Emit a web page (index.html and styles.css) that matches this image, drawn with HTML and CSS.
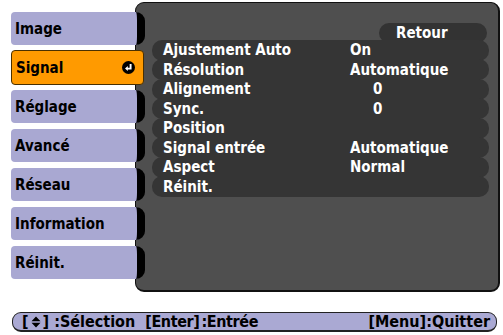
FILE: index.html
```html
<!DOCTYPE html>
<html>
<head>
<meta charset="utf-8">
<link rel="stylesheet" href="styles.css">
</head>
<body>
<div class="screen">
  <div class="main">
    <div class="tabs">
      <div class="tab"><span>Image</span></div>
      <div class="tab active"><span>Signal</span>
        <svg class="enter" width="13" height="13" viewBox="0 0 13 13"><circle cx="6.5" cy="6.5" r="6.5" fill="#000"/><path d="M8.6 3v4.6H5" fill="none" stroke="#fff" stroke-width="1.9"/><path d="M3 7.6l2.8-2.5v5z" fill="#fff"/></svg>
      </div>
      <div class="tab"><span>Réglage</span></div>
      <div class="tab"><span>Avancé</span></div>
      <div class="tab"><span>Réseau</span></div>
      <div class="tab"><span>Information</span></div>
      <div class="tab"><span>Réinit.</span></div>
    </div>
    <div class="panel">
      <div class="top"><div class="retour">Retour</div></div>
      <div class="rows">
        <div class="row"><span class="lbl">Ajustement Auto</span><span class="val">On</span></div>
        <div class="row"><span class="lbl">Résolution</span><span class="val">Automatique</span></div>
        <div class="row"><span class="lbl">Alignement</span><span class="val num">0</span></div>
        <div class="row"><span class="lbl">Sync.</span><span class="val num">0</span></div>
        <div class="row"><span class="lbl">Position</span><span class="val"></span></div>
        <div class="row"><span class="lbl">Signal entrée</span><span class="val">Automatique</span></div>
        <div class="row"><span class="lbl">Aspect</span><span class="val">Normal</span></div>
        <div class="row"><span class="lbl">Réinit.</span><span class="val"></span></div>
      </div>
    </div>
  </div>
  <div class="help">
    <span class="h1">[<svg class="ud" width="10" height="12" viewBox="0 0 10 12"><path d="M5 0.5L9.5 5.3H0.5z M5 11.5L9.5 6.7H0.5z" fill="#000"/></svg>] :Sélection</span>
    <span class="h2">[Enter]<span class="gap">:Entrée</span></span>
    <span class="h3">[Menu]:Quitter</span>
  </div>
</div>
</body>
</html>
```
FILE: styles.css
```css
html, body { margin: 0; padding: 0; background: #fff; }
.screen {
  width: 503px; height: 335px;
  font-family: "DejaVu Sans Condensed", "DejaVu Sans", sans-serif;
  font-weight: bold;
  position: relative;
}
.main {
  display: flex;
  padding: 2px 3px 0 11px;
  height: 290px;
}
.tabs {
  width: 134px;
  display: flex; flex-direction: column;
  gap: 6px;
  padding-top: 10px;
  position: relative; z-index: 2;
  flex: none;
}
.tab {
  height: 33px;
  display: flex; align-items: center; justify-content: space-between;
  background: #a9a8d2;
  border-radius: 4px 9px 9px 4px;
  border-right: 8px solid #000;
  box-sizing: border-box;
  padding: 0 6px 0 4px;
  font-size: 15px;
  color: #000;
  width: 134px;
}
.tab.active {
  background: #ff9a00;
  border: 1px solid #4a3000;
  border-radius: 4px;
  height: 35px;
  margin: -1px 0 -1px;
  width: 133px;
  padding-right: 8px;
}
.enter { display: block; }
.panel {
  flex: 1;
  margin-left: -10px;
  background: #4f4f4f;
  border: 1px solid #111;
  border-right-width: 2px;
  border-bottom-width: 2px;
  border-radius: 9px;
  display: flex; flex-direction: column;
  padding-left: 16px; padding-right: 9px;
  box-sizing: border-box;
}
.top {
  height: 38px;
  display: flex; justify-content: flex-end; align-items: flex-end;
}
.retour {
  width: 108px; height: 20px;
  background: #333;
  border-radius: 10px;
  color: #fff;
  font-size: 15px;
  line-height: 20px;
  padding-left: 17px;
  box-sizing: border-box;
  margin-bottom: -2px;
  margin-right: 2px;
}
.rows {
  display: flex; flex-direction: column;
}
.row {
  height: 21px;
  margin-top: -1.5px;
  background: #353535;
  border-radius: 10px;
  display: flex; align-items: center;
  color: #fff;
  font-size: 15px;
  padding-left: 11px;
}
.lbl { width: 187px; }
.num { padding-left: 23px; }
.help {
  position: absolute;
  left: 12px; top: 312px;
  width: 485px; height: 20px;
  box-sizing: border-box;
  background: #aaa9d3;
  border: 1px solid #222;
  border-bottom-width: 2px;
  border-radius: 9px;
  display: flex; align-items: center;
  font-size: 16px;
  color: #000;
  padding-left: 9px;
  white-space: pre;
}
.ud { display: inline-block; vertical-align: -1px; margin: 0 2px; }
.h2 { margin-left: 10px; letter-spacing: -0.4px; }
.gap { margin-left: 2px; }
.h3 { margin-left: auto; padding-right: 6px; }
```
